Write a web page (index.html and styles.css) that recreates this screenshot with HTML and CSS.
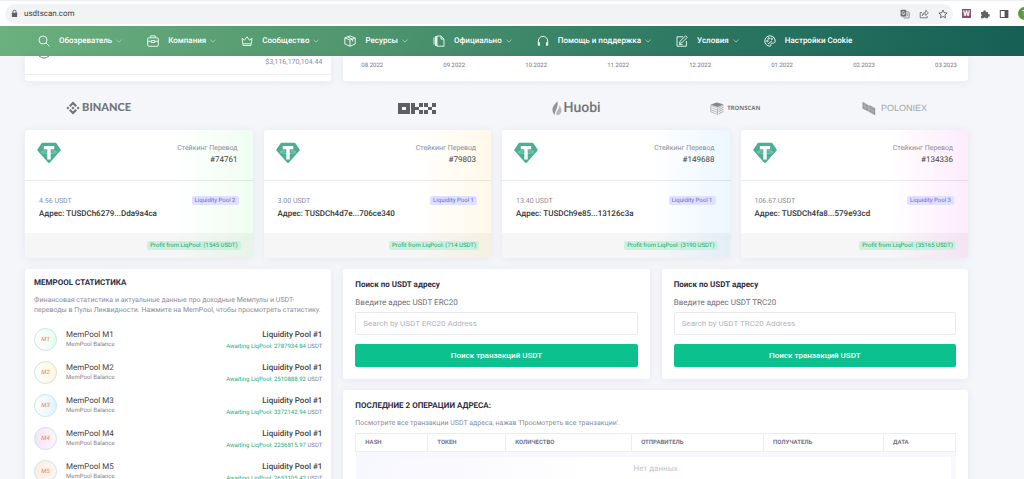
FILE: index.html
```html
<!DOCTYPE html>
<html lang="ru">
<head>
<meta charset="utf-8">
<title>usdtscan.com</title>
<link rel="stylesheet" href="styles.css">
</head>
<body>
<svg class="defs" aria-hidden="true">
  <symbol id="chev" viewBox="0 0 6 4"><path d="M.5.7 3 3.100 5.500.7" fill="none" stroke="currentColor" stroke-width=".7"/></symbol>
  <symbol id="tether" viewBox="0 0 24 21">
    <path d="M5.800.2h12.400q.9 0 1.400.7l4 6q.4.700-.2 1.300L12.700 20.300q-.7.6-1.400 0L.6 8.200q-.6-.6-.2-1.300l4-6q.5-.7 1.400-.7z" fill="#4caf92"/>
    <path d="M6.800 3.600h10.400v3.200h-3.500v10.200h-3.400V6.800H6.800z" fill="#fff"/>
    <path d="M9.500 8.300c-3.400.2-5.200.7-5.200 1.300s3.200 1.300 7.700 1.300 7.700-.6 7.700-1.300-1.800-1.100-5.200-1.300" fill="none" stroke="#fff" stroke-opacity=".6" stroke-width=".6"/>
  </symbol>
</svg>
<div class="browser">
  <div class="address">
    <svg class="lock" viewBox="0 0 8 10"><path d="M2.200 4.500V3a1.800 1.800 0 0 1 3.600 0v1.500" fill="none" stroke="#5f6368" stroke-width="1.100"/><rect x="1" y="4" width="6" height="5" rx=".7" fill="#5f6368"/></svg>
    <span class="url">usdtscan.com</span>
    <svg class="tool" viewBox="0 0 10 10"><rect x="3.800" y="2.800" width="5.400" height="6.200" rx=".6" fill="none" stroke="#777b80" stroke-width=".8"/><rect x=".6" y=".8" width="5.600" height="6.600" rx=".6" fill="#6d7176"/><path d="M4.500 3.200A1.400 1.400 0 1 0 4.800 4.300H3.500" fill="none" stroke="#fff" stroke-width=".7"/><path d="M6.300 5h2.300M7.500 4.300V5M8.200 5 6.700 7.500M6.800 5.800l1.600 1.700" stroke="#777b80" stroke-width=".5"/></svg>
    <svg class="tool" viewBox="0 0 10 10" fill="none" stroke="#6d7176" stroke-width=".9"><path d="M3 3.500H1.200v5.300h7V7"/><path d="M3.200 6.700c.3-2.300 1.500-3.400 3.500-3.500V1.300l2.700 2.600-2.700 2.500V4.800c-1.600 0-2.700.6-3.500 1.900z"/></svg>
    <svg class="tool" viewBox="0 0 10 10"><path d="m5 1 1.200 2.700 2.900.3-2.200 2 .7 2.900L5 7.400 2.400 8.900l.7-2.900L.9 4l2.900-.3z" fill="none" stroke="#5f6368" stroke-width=".9"/></svg>
  </div>
  <span class="ext">W</span>
  <svg class="tool" viewBox="0 0 10 10"><path d="M1 3h2.300a1.300 1.300 0 1 1 2.500 0H8v2.200a1.300 1.300 0 1 1 0 2.400V9.300H5.700a1.200 1.200 0 0 0-2.300 0H1V7.200a1.200 1.200 0 0 0 0-2.200z" fill="#5f6368"/></svg>
  <svg class="tool" viewBox="0 0 10 10"><rect x="1.300" y="1.500" width="7.600" height="7" fill="#fff" stroke="#4f5358"/><rect x="5.600" y="1.500" width="3.300" height="7" fill="#4f5358"/></svg>
  <span class="avatar">T</span>
</div>
<nav class="nav">
  <a href="#"><svg class="ico" viewBox="0 0 12 12"><circle cx="5" cy="5" r="4"/><path d="m8 8 3.500 3.500"/></svg>Обозреватель<svg class="chev"><use href="#chev"/></svg></a>
  <a href="#"><svg class="ico" viewBox="0 0 12 12"><rect x=".7" y="2.800" width="10.600" height="8.500" rx="1.200"/><path d="M3.700 2.800V.8h4.600v2M.7 6.300h3.600m3.400 0h3.600M4.300 5.500h3.400v2H4.300z"/></svg>Компания<svg class="chev"><use href="#chev"/></svg></a>
  <a href="#"><svg class="ico" viewBox="0 0 12 12"><path d="m1 3.200 2.500 2L6 1.800l2.500 3.400 2.500-2-1 7.300H2z"/><path d="M2.200 8.800h7.600"/></svg>Сообщество<svg class="chev"><use href="#chev"/></svg></a>
  <a href="#"><svg class="ico" viewBox="0 0 12 12"><path d="m6 .9 5.200 2v6L6 11.300.8 8.900v-6zM.8 2.900 6 5l5.200-2.100M6 5v6.300M3.400 1.900l5.200 2.200v2.300"/></svg>Ресурсы<svg class="chev"><use href="#chev"/></svg></a>
  <a href="#"><svg class="ico" viewBox="0 0 12 12"><path d="M4 1h4l3 3v7.200H4z"/><path d="M8 1v3h3M2.500 1.500v9.500M1 2.500v7"/><path d="M3.200 1v10" stroke-width="1.500"/></svg>Официально<svg class="chev"><use href="#chev"/></svg></a>
  <a href="#"><svg class="ico" viewBox="0 0 12 12"><path d="M1.300 10V6a4.700 4.700 0 0 1 9.400 0v4"/><path d="M2 7.200v3.600M10 7.200v3.600" stroke-width="2"/></svg>Помощь и поддержка<svg class="chev"><use href="#chev"/></svg></a>
  <a href="#"><svg class="ico" viewBox="0 0 12 12"><path d="M7 1.800H1v9.400h9.400V6"/><path d="M3.500 8.500 4 6.300 9.600.8l1.600 1.600-5.600 5.600zM3 9.300h3.500"/></svg>Условия<svg class="chev"><use href="#chev"/></svg></a>
  <a href="#"><svg class="ico" viewBox="0 0 12 12"><path d="M6 .8a5.200 5.200 0 1 0 0 10.400c1.500 0 .6-1.500.9-2.400.5-1.200 4.300.3 4.300-2.800C11.200 3 9 .8 6 .8z"/><circle cx="3.400" cy="6" r=".8"/><circle cx="4.800" cy="3.400" r=".8"/><circle cx="7.900" cy="3.700" r=".8"/><path d="M4 9 8 5.800"/></svg>Настройки Cookie</a>
</nav>
<main class="page">
  <div class="thirds top">
    <section class="card prev">
      <svg class="coin" viewBox="0 0 12 3"><path d="M1 0q5 4.200 10 0" fill="none" stroke="#777" stroke-width="1"/></svg>
      <span>$3,116,170,104.44</span>
    </section>
    <section class="card wide axis"><span>08.2022</span><span>09.2022</span><span>10.2022</span><span>11.2022</span><span>12.2022</span><span>01.2022</span><span>02.2023</span><span>03.2023</span></section>
  </div>
  <div class="logos">
    <div class="logo binance"><svg viewBox="0 0 14 14" width="14" height="14" fill="#737477"><path d="m7 .5 4 4-1.500 1.500L7 3.500 4.500 6 3 4.500zM7 13.500l4-4L9.500 8 7 10.500 4.500 8 3 9.500zM1.900 5.500 3.400 7 1.900 8.500.4 7zM12.100 5.500 13.600 7l-1.500 1.500L10.600 7zM7 5.400 8.600 7 7 8.600 5.400 7z"/></svg>BINANCE</div>
    <div class="logo okx"><svg viewBox="0 0 38 11" width="38" height="11" fill="#5e5f61"><path fill-rule="evenodd" d="M0 0h12v11H0zM4 4v3h4V4zM13 0h4v11h-4zM17 4h4v3h-4zM21 0h4v4h-4zM21 7h4v4h-4zM26 0h4v4h-4zM34 0h4v4h-4zM30 4h4v3h-4zM26 7h4v4h-4zM34 7h4v4h-4z"/></svg></div>
    <div class="logo huobi"><svg viewBox="0 0 10 15" width="10" height="15"><path d="M5.500.3C1.500 4.500.3 6.500.5 9.500c.1 2 1 3.300 2.500 4.300C2.500 9.500 6.600 7.500 5.500.3z" fill="#929396"/><path d="M7.300 4.500c.8 4-4 5-2.600 9.800 3 0 4.700-1.900 4.700-4.700 0-2.100-.8-3.900-2.100-5.100z" fill="#b4b5b8"/></svg>Huobi</div>
    <div class="logo tron"><svg viewBox="0 0 14 13" width="14" height="13"><path d="m.5 2.800 6-2.300 7 1.700L8 5z" fill="#858689"/><path d="M.7 3.500v6.200l6.800 2.800V5.700zM1 5.800l6.500 2.300M1 8l6.500 2.400" fill="none" stroke="#a2a3a6" stroke-width=".7"/><path d="m8.500 5.700 5-2.500M8.500 7.700l5-2.500M8.500 9.700l5-2.500M8.500 12l5-2.700" stroke="#a2a3a6" stroke-width=".9"/></svg>TRONSCAN</div>
    <div class="logo polo"><svg viewBox="0 0 14 15" width="14" height="15"><path d="m.5.8 6.300 3.700v6.200L.5 7.500z" fill="#97989b"/><path d="m7.200 4 6 3.200v7L7.200 11z" fill="#97989b"/><path d="M.5 4 13.200 11M3 2.500v6M10 5.500v7" stroke="#c3c4c7" stroke-width=".5"/></svg>POLONIEX</div>
  </div>
  <div class="stakes">
    <article class="card stake green">
      <header><svg class="tether"><use href="#tether"/></svg><div><p>Стейкинг Перевод</p><b>#74761</b></div></header>
      <div class="mid"><p><span>4.56 USDT</span><span class="pill">Liquidity Pool 2</span></p><strong>Адрес: TUSDCh6279...Dda9a4ca</strong></div>
      <footer><span class="pill profit">Profit from LiqPool: (1545 USDT)</span></footer>
    </article>
    <article class="card stake yellow">
      <header><svg class="tether"><use href="#tether"/></svg><div><p>Стейкинг Перевод</p><b>#79803</b></div></header>
      <div class="mid"><p><span>3.00 USDT</span><span class="pill">Liquidity Pool 1</span></p><strong>Адрес: TUSDCh4d7e...706ce340</strong></div>
      <footer><span class="pill profit">Profit from LiqPool: (714 USDT)</span></footer>
    </article>
    <article class="card stake blue">
      <header><svg class="tether"><use href="#tether"/></svg><div><p>Стейкинг Перевод</p><b>#149688</b></div></header>
      <div class="mid"><p><span>13.40 USDT</span><span class="pill">Liquidity Pool 1</span></p><strong>Адрес: TUSDCh9e85...13126c3a</strong></div>
      <footer><span class="pill profit">Profit from LiqPool: (3190 USDT)</span></footer>
    </article>
    <article class="card stake pink">
      <header><svg class="tether"><use href="#tether"/></svg><div><p>Стейкинг Перевод</p><b>#134336</b></div></header>
      <div class="mid"><p><span>106.67 USDT</span><span class="pill">Liquidity Pool 3</span></p><strong>Адрес: TUSDCh4fa8...579e93cd</strong></div>
      <footer><span class="pill profit">Profit from LiqPool: (35165 USDT)</span></footer>
    </article>
  </div>
  <div class="thirds">
    <section class="card pool">
      <h2>MEMPOOL СТАТИСТИКА</h2>
      <p class="note">Финансовая статистика и актуальные данные про доходные Мемпулы и USDT-переводы в Пулы Ликвидности. Нажмите на MemPool, чтобы просмотреть статистику.</p>
      <ul>
        <li><i class="m1">M1</i><div><b>MemPool M1</b><small>MemPool Balance</small></div><div class="end"><strong>Liquidity Pool #1</strong><small><em>Awaiting LiqPool: 2787934.84</em> USDT</small></div></li>
        <li><i class="m2">M2</i><div><b>MemPool M2</b><small>MemPool Balance</small></div><div class="end"><strong>Liquidity Pool #1</strong><small><em>Awaiting LiqPool: 2510888.92</em> USDT</small></div></li>
        <li><i class="m3">M3</i><div><b>MemPool M3</b><small>MemPool Balance</small></div><div class="end"><strong>Liquidity Pool #1</strong><small><em>Awaiting LiqPool: 3372142.94</em> USDT</small></div></li>
        <li><i class="m4">M4</i><div><b>MemPool M4</b><small>MemPool Balance</small></div><div class="end"><strong>Liquidity Pool #1</strong><small><em>Awaiting LiqPool: 2256815.97</em> USDT</small></div></li>
        <li><i class="m5">M5</i><div><b>MemPool M5</b><small>MemPool Balance</small></div><div class="end"><strong>Liquidity Pool #1</strong><small><em>Awaiting LiqPool: 2653105.42</em> USDT</small></div></li>
      </ul>
    </section>
    <form class="card search">
      <h3>Поиск по USDT адресу</h3>
      <label for="erc">Введите адрес USDT ERC20</label>
      <input id="erc" type="text" placeholder="Search by USDT ERC20 Address">
      <button type="button">Поиск транзакций USDT</button>
    </form>
    <form class="card search">
      <h3>Поиск по USDT адресу</h3>
      <label for="trc">Введите адрес USDT TRC20</label>
      <input id="trc" type="text" placeholder="Search by USDT TRC20 Address">
      <button type="button">Поиск транзакций USDT</button>
    </form>
    <section class="card wide ops">
      <h2>ПОСЛЕДНИЕ 2 ОПЕРАЦИИ АДРЕСА:</h2>
      <p class="note">Посмотрите все транзакции USDT адреса, нажав 'Просмотреть все транзакции'.</p>
      <table>
        <colgroup><col class="c1"><col class="c2"><col class="c3"><col class="c4"><col class="c5"><col class="c6"></colgroup>
        <thead><tr><th>HASH</th><th>ТОКЕН</th><th>КОЛИЧЕСТВО</th><th>ОТПРАВИТЕЛЬ</th><th>ПОЛУЧАТЕЛЬ</th><th>ДАТА</th></tr></thead>
        <tbody><tr><td colspan="6"><div class="empty">Нет данных</div></td></tr></tbody>
      </table>
    </section>
  </div>
</main>
</body>
</html>
```
FILE: styles.css
```css
* { box-sizing: border-box; margin: 0; padding: 0; }
body {
  height: 100vh;
  overflow: hidden;
  background: #f4f6fa;
  font: 8px/12px Roboto, sans-serif;
  color: #444;
  text-rendering: geometricPrecision;
}
.defs { display: none; }

.browser {
  display: flex;
  align-items: center;
  gap: 9px;
  height: 26px;
  padding: 0 0 0 5px;
  background: #fff;
  border-top: 1px solid #eceef2;
  overflow: hidden;
}
.address {
  flex: 1;
  display: flex;
  align-items: center;
  gap: 9px;
  height: 20px;
  padding: 0 5px 0 6px;
  border-radius: 10px;
  background: #f1f3f4;
}
.lock { width: 7px; height: 9px; margin-right: -3px; }
.url { flex: 1; color: #3c4043; }
.tool { flex: none; width: 10px; height: 10px; }
.ext {
  width: 9px;
  background: #89506f;
  color: #fff;
  font-weight: 700;
  line-height: 9px;
  text-align: center;
}
.avatar {
  flex: none;
  width: 13px;
  height: 13px;
  margin-right: -7px;
  border-radius: 50%;
  background: #5b9a36;
  color: #fff;
  line-height: 13px;
  text-align: center;
}

.nav {
  display: flex;
  align-items: center;
  gap: 25px;
  height: 30px;
  padding-left: 38px;
  background: linear-gradient(100deg, #6bb07e, #4f966f 35%, #2e7963 66%, #155f55);
}
.nav a {
  display: flex;
  align-items: center;
  color: #fff;
  font-weight: 500;
  text-decoration: none;
  white-space: nowrap;
}
.ico {
  width: 12px;
  height: 12px;
  margin-right: 9px;
  fill: none;
  stroke: #e3f5e9;
  stroke-width: 1;
}
.chev { width: 6px; height: 4px; margin-left: 4px; color: #b9dfc8; }

.page { padding: 0 56px 0 25px; }
.thirds { display: grid; grid-template-columns: repeat(3, 1fr); gap: 11px 12px; }
.card {
  background: #fff;
  border-radius: 3px;
  box-shadow: 0 1px 8px rgba(60, 70, 100, .08);
}
.wide { grid-column: 2 / 4; }
.top .card { height: 25px; border-radius: 0 0 3px 3px; }
.prev {
  display: flex;
  justify-content: space-between;
  padding: 0 9px 0 13px;
  color: #8b8c9d;
  font-size: 7px;
  background: linear-gradient(#fff 18px, #eeeff3 18px, #eeeff3 19px, #fff 19px);
}
.coin { width: 12px; height: 3px; }
.axis {
  display: flex;
  justify-content: space-between;
  padding: 4px 11px 0 18px;
  color: #77787f;
  font-size: 6px;
}

.logos {
  display: grid;
  grid-template-columns: repeat(6, 1fr);
  align-items: center;
  height: 49px;
  margin: 0 -6px;
  padding-top: 5px;
}
.logo { display: flex; align-items: center; justify-content: center; gap: 2px; }
.okx { grid-column: 3; }
.binance { color: #737477; font: 900 11px/14px Lato, sans-serif; }
.huobi { color: #737477; font: 500 14px/15px Roboto, sans-serif; }
.tron { gap: 3px; color: #77787b; font: 700 6px/8px "Open Sans", sans-serif; }
.polo { gap: 5px; color: #a3a4a7; font: 400 9px/12px "Liberation Sans", sans-serif; }

.stakes { display: grid; grid-template-columns: repeat(4, 1fr); gap: 11px; margin-bottom: 11px; }
.stake { overflow: hidden; }
.green { background: linear-gradient(90deg, #fff 65%, #f0fdf1); }
.yellow { background: linear-gradient(90deg, #fff 65%, #fff9ea); }
.blue { background: linear-gradient(90deg, #fff 65%, #ecf7fe); }
.pink { background: linear-gradient(90deg, #fff 65%, #fdecfc); }
.stake header {
  display: flex;
  justify-content: space-between;
  height: 51px;
  padding: 12px 15px 0 12px;
  border-bottom: 1px solid rgba(40, 50, 60, .1);
  text-align: right;
}
.tether { width: 24px; height: 22px; }
.stake header p { color: #8b8c9d; font-size: 7px; }
.stake header b { font-weight: 400; }
.mid { height: 52px; padding: 12px 14px 0; }
.mid p { display: flex; justify-content: space-between; align-items: center; height: 15px; color: #8b8c9d; font-size: 7px; }
.mid strong { font-weight: 500; color: #333; }
.stake footer {
  display: flex;
  justify-content: flex-end;
  align-items: center;
  height: 25px;
  padding-right: 12px;
  background: rgba(0, 0, 0, .035);
}
.pill {
  padding: 0 3px;
  border-radius: 2px;
  background: #e0e0ff;
  color: #6c68dc;
  font: 400 6px/9px Roboto, sans-serif;
}
.profit { background: #c9f2df; color: #2ba373; }

.pool { grid-row: span 2; padding: 7px 9px 20px; }
h2 { font-size: 8px; line-height: 14px; font-weight: 700; color: #2c2d43; }
.note { color: #8b8c9d; font-size: 7px; line-height: 10px; }
.pool .note { margin-top: 5px; }
.pool ul { display: grid; gap: 10px; margin-top: 13px; list-style: none; }
.pool li { display: flex; height: 23px; }
.pool i {
  width: 23px;
  margin-right: 9px;
  border: 1px solid #c9e8dc;
  border-radius: 50%;
  color: #ee966f;
  font-size: 6px;
  font-weight: 500;
  line-height: 21px;
  text-align: center;
}
.m1 { background: linear-gradient(90deg, #fff, #e6fbee); }
.m2 { background: linear-gradient(90deg, #fff, #fff6dc); }
.m3 { background: linear-gradient(90deg, #fff, #e0f3fd); }
.m4 { background: linear-gradient(90deg, #f7e3fb, #fdf5fe); }
.m5 { background: linear-gradient(90deg, #fdeee6, #fff6f0); }
.pool b, .pool strong { display: block; line-height: 13px; font-weight: 400; }
.pool strong { font-weight: 500; }
.pool small { display: block; color: #7f8092; font-size: 6px; line-height: 8px; }
.end { margin-left: auto; text-align: right; }
.pool .end small { line-height: 11px; }
.pool em { font-style: normal; color: #2aad79; }

.search { display: flex; flex-direction: column; padding: 10px 12px 12px; }
h3 { font-size: 8px; line-height: 12px; font-weight: 700; color: #2c2d43; }
.search label { margin: 6px 0 3px; color: #6d6e7b; }
.search input {
  width: 100%;
  height: 23px;
  padding: 0 7px;
  border: 1px solid #e9eaf0;
  border-radius: 2px;
  background: #fff;
  font: inherit;
  color: #444;
}
.search input::placeholder { color: #b2b3bd; }
.search button {
  height: 23px;
  margin-top: 9px;
  border: 0;
  border-radius: 2px;
  background: #0bc18d;
  color: #fff;
  font: inherit;
  font-weight: 500;
}

.ops { padding: 9px 12px 12px; }
.ops .note { margin: 5px 0; }
table { width: 100%; border-collapse: collapse; table-layout: fixed; }
.c1 { width: 12%; }
.c2 { width: 13%; }
.c3 { width: 21%; }
.c4 { width: 22%; }
.c5 { width: 20%; }
.c6 { width: 12%; }
th {
  height: 18px;
  padding-left: 9px;
  border: 1px solid #ecedf4;
  color: #73748a;
  font-size: 6px;
  font-weight: 700;
  text-align: left;
}
td { padding: 5px; background: #f7f7fe; }
.empty {
  height: 40px;
  padding-top: 6px;
  background: linear-gradient(90deg, #f7f7fe, #fff 40%);
  color: #c3c4cb;
  text-align: center;
}
```
